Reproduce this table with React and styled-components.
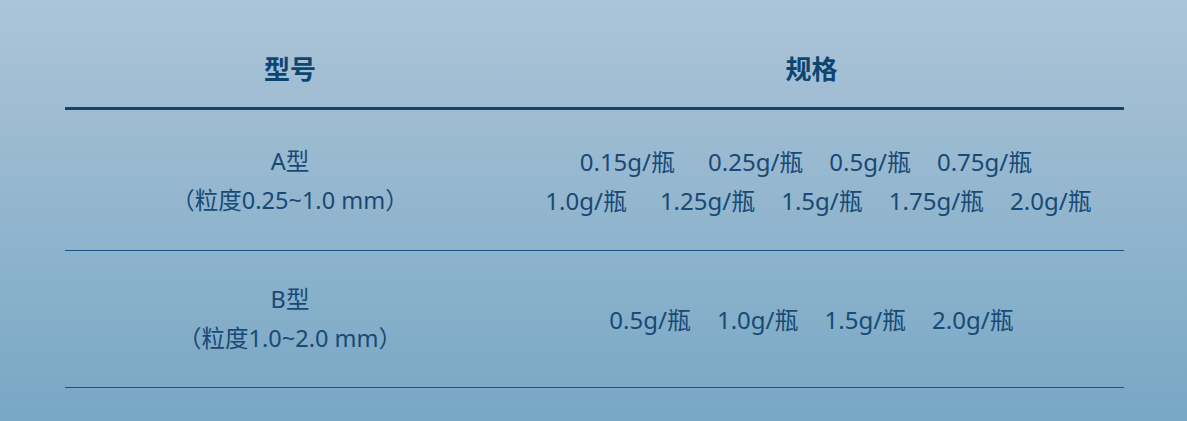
import React from 'react'
import styled, { createGlobalStyle } from 'styled-components'

const GlobalStyle = createGlobalStyle`
  html, body {
    margin: 0;
    padding: 0;
  }
  body {
    font-family: "Noto Sans", "Noto Sans CJK SC", sans-serif;
    background: linear-gradient(180deg, #acc4d8 0%, #78a7c4 100%);
    min-height: 421px;
  }
`

const Page = styled.div`
  height: 421px;
  padding: 50px 63px 0 65px;
  box-sizing: border-box;
`

const Row = styled.div`
  display: grid;
  grid-template-columns: 450px 1fr;
  align-items: center;
  border-bottom: ${p => (p.$head ? '3px solid #0e4672' : '1px solid #1d5481')};
  padding: ${p => p.$pad};
`

const HeadCell = styled.div`
  text-align: center;
  font-size: 26px;
  font-weight: 700;
  line-height: 39px;
  color: #0d4571;
  padding-right: ${p => p.$right || 0}px;
`

const Cell = styled.div`
  display: flex;
  flex-direction: column;
  align-items: center;
  font-size: ${p => p.$size || 23.5}px;
  line-height: 39px;
  color: #174a75;
  padding-right: ${p => p.$right || 0}px;
`

const SpecLine = styled.div`
  display: flex;
  gap: 26px;
  padding-left: ${p => p.$lead || 0}px;
  padding-right: ${p => p.$trail || 0}px;
  white-space: nowrap;
`

const Spec = styled.span`
  padding-right: ${p => (p.$wide ? 7 : 0)}px;
`

const rows = [
  {
    type: 'A型',
    size: '（粒度0.25~1.0 mm）',
    pad: '32px 0 30px',
    lines: [
      { lead: 14, trail: 25, items: ['0.15g/瓶', '0.25g/瓶', '0.5g/瓶', '0.75g/瓶'] },
      { lead: 14, trail: 0, items: ['1.0g/瓶', '1.25g/瓶', '1.5g/瓶', '1.75g/瓶', '2.0g/瓶'] }
    ]
  },
  {
    type: 'B型',
    size: '（粒度1.0~2.0 mm）',
    pad: '29px 0 29px',
    lines: [{ lead: 0, trail: 0, items: ['0.5g/瓶', '1.0g/瓶', '1.5g/瓶', '2.0g/瓶'] }]
  }
]

export default function App() {
  return (
    <>
      <GlobalStyle />
      <Page>
        <Row $head $pad="0 0 18px">
          <HeadCell>型号</HeadCell>
          <HeadCell $right={16}>规格</HeadCell>
        </Row>
        {rows.map(r => (
          <Row key={r.type} $pad={r.pad}>
            <Cell>
              <span>{r.type}</span>
              <span>{r.size}</span>
            </Cell>
            <Cell $right={16} $size={24}>
              {r.lines.map((l, i) => (
                <SpecLine key={i} $lead={l.lead} $trail={l.trail}>
                  {l.items.map((s, j) => (
                    <Spec key={s} $wide={j === 0 && r.type === 'A型'}>
                      {s}
                    </Spec>
                  ))}
                </SpecLine>
              ))}
            </Cell>
          </Row>
        ))}
      </Page>
    </>
  )
}
